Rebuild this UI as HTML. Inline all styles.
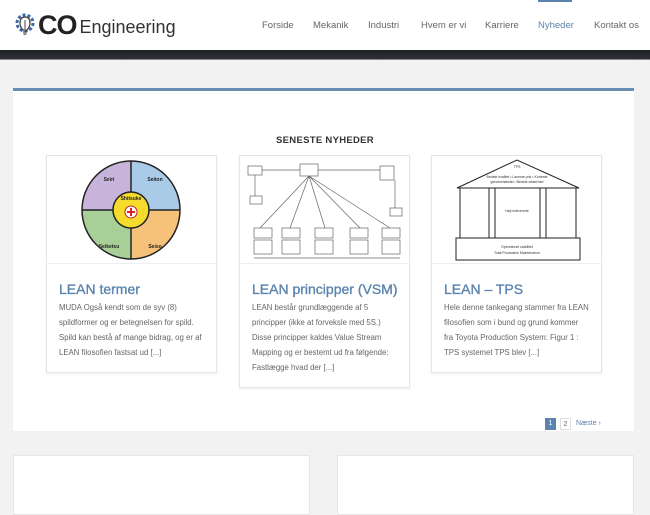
<!DOCTYPE html>
<html><head><meta charset="utf-8"><style>
*{box-sizing:border-box;margin:0;padding:0}
body{width:650px;height:500px;overflow:hidden;background:#f2f2f2;font-family:"Liberation Sans",sans-serif;position:relative}
.hdr{position:absolute;left:0;top:0;width:650px;height:50px;background:#fff}
.logo{position:absolute;left:14px;top:10px;display:flex;align-items:center}
.logo b{font-size:27px;color:#222;letter-spacing:-1px;margin-left:2px}
.logo span{font-size:18px;color:#333;margin-left:3px;margin-top:4px}
.nav{position:absolute;top:20px;font-size:9.5px;color:#666}
.bar{position:absolute;left:0;top:50px;width:650px;height:10px;background:linear-gradient(#1e2226,#2c3036);border-bottom:1px solid #888}
.main{position:absolute;left:13px;top:88px;width:621px;height:343px;background:#fff;border-top:3px solid #6a8db4}
h2{position:absolute;top:135px;left:0;width:650px;text-align:center;font-size:9.5px;font-weight:bold;color:#333;letter-spacing:.3px}
.card{position:absolute;top:155px;width:171px;background:#fff;border:1px solid #e6e6e6;box-shadow:0 1px 2px rgba(0,0,0,.08)}
.img{height:108px;border-bottom:1px solid #eee;position:relative;overflow:hidden}
.t{font-size:14px;color:#5a84ad;margin:17px 0 0 12px;font-weight:normal;-webkit-text-stroke:.35px #5a84ad;white-space:nowrap}
.p{font-size:7.8px;color:#666;line-height:15px;margin:3px 6px 12px 12px;white-space:nowrap}
.bot{position:absolute;top:455px;height:60px;background:#fff;border:1px solid #e6e6e6}
.pg{position:absolute;top:418px;font-size:7px;height:12px;line-height:12px;text-align:center}
</style></head><body>
<div class="hdr">
 <div class="logo">
  <svg width="22" height="26" viewBox="0 0 22 26"><circle cx="11" cy="10" r="8" fill="none" stroke="#3a6aa8" stroke-width="3" stroke-dasharray="3 2"/><path d="M6 10 Q6 4 11 4 Q16 4 16 10 Q16 14 13 17 L9 17 Q6 14 6 10Z" fill="#fff" stroke="#444" stroke-width="1.3"/><path d="M9 19h4M9.5 21h3" stroke="#444" stroke-width="1.3"/><path d="M11 7v9" stroke="#444"/></svg>
  <b>CO</b><span>Engineering</span>
 </div>
 <div class="nav" style="left:262px">Forside</div>
 <div class="nav" style="left:313px">Mekanik</div>
 <div class="nav" style="left:368px">Industri</div>
 <div class="nav" style="left:421px">Hvem er vi</div>
 <div class="nav" style="left:485px">Karriere</div>
 <div class="nav" style="left:538px;color:#5a84ad">Nyheder</div>
 <div style="position:absolute;left:538px;top:0;width:34px;height:2px;background:#5a84ad"></div>
 <div class="nav" style="left:594px">Kontakt os</div>
</div>
<div class="bar"></div>
<div class="main"></div>
<h2>SENESTE NYHEDER</h2>

<div class="card" style="left:46px">
 <div class="img">
  <svg width="171" height="108" viewBox="0 0 171 108">
   <path d="M84 54 L84 5 A49 49 0 0 0 35 54Z" fill="#c8b4da"/>
   <path d="M84 54 L84 5 A49 49 0 0 1 133 54Z" fill="#a9cbe8"/>
   <path d="M84 54 L35 54 A49 49 0 0 0 84 103Z" fill="#a8cf98"/>
   <path d="M84 54 L133 54 A49 49 0 0 1 84 103Z" fill="#f6c27a"/>
   <circle cx="84" cy="54" r="49" fill="none" stroke="#222" stroke-width="1.5"/>
   <path d="M84 5V103M35 54H133" stroke="#222" stroke-width="1.5"/>
   <circle cx="84" cy="54" r="18" fill="#f5dc2c" stroke="#222" stroke-width="1.5"/>
   <circle cx="84" cy="56" r="6" fill="#fff" stroke="#c22"/>
   <path d="M84 52v8M80 56h8" stroke="#d22" stroke-width="2"/>
   <g font-size="5" font-weight="bold" fill="#222" text-anchor="middle"><text x="62" y="25">Seiri</text><text x="108" y="25">Seiton</text><text x="84" y="44">Shitsuke</text><text x="62" y="92">Seiketsu</text><text x="108" y="92">Seiso</text></g>
  </svg>
 </div>
 <div class="t">LEAN termer</div>
 <div class="p">MUDA Også kendt som de syv (8)<br>spildformer og er betegnelsen for spild.<br>Spild kan bestå af mange bidrag, og er af<br>LEAN filosofien fastsat ud [...]</div>
</div>

<div class="card" style="left:239px">
 <div class="img">
  <svg width="171" height="108" viewBox="0 0 171 108" fill="none" stroke="#666" stroke-width=".7">
   <rect x="8" y="10" width="14" height="9"/><rect x="60" y="8" width="18" height="12"/><rect x="140" y="10" width="14" height="14"/>
   <rect x="10" y="40" width="12" height="8"/><rect x="150" y="52" width="12" height="8"/>
   <path d="M22 14L60 14M78 14L140 14M69 20L20 72M69 20L50 72M69 20L85 72M69 20L120 72M69 20L150 72M15 19V40M155 24V52"/>
   <rect x="14" y="72" width="18" height="10"/><rect x="42" y="72" width="18" height="10"/><rect x="75" y="72" width="18" height="10"/><rect x="110" y="72" width="18" height="10"/><rect x="142" y="72" width="18" height="10"/>
   <rect x="14" y="84" width="18" height="14"/><rect x="42" y="84" width="18" height="14"/><rect x="75" y="84" width="18" height="14"/><rect x="110" y="84" width="18" height="14"/><rect x="142" y="84" width="18" height="14"/>
   <path d="M14 102H160"/>
  </svg>
 </div>
 <div class="t">LEAN principper (VSM)</div>
 <div class="p">LEAN består grundlæggende af 5<br>principper (ikke at forveksle med 5S.)<br>Disse principper kaldes Value Stream<br>Mapping og er bestemt ud fra følgende:<br>Fastlægge hvad der [...]</div>
</div>

<div class="card" style="left:431px">
 <div class="img">
  <svg width="171" height="108" viewBox="0 0 171 108" fill="none" stroke="#222" stroke-width="1">
   <path d="M25 32L85 4L147 32Z"/>
   <rect x="28" y="32" width="116" height="50"/>
   <path d="M57 32V82M63 32V82M108 32V82M114 32V82"/>
   <rect x="24" y="82" width="124" height="22"/>
   <g font-size="3.5" fill="#333" stroke="none" text-anchor="middle"><text x="85" y="12">TPS</text><text x="85" y="22">Bedste kvalitet • Laveste pris • Korteste</text><text x="85" y="27">gennemløbstid • Bedste sikkerhed</text><text x="85" y="56">Høj motiverede</text><text x="85" y="92">Operationel stabilitet</text><text x="85" y="98">Total Productive Maintenance</text></g>
  </svg>
 </div>
 <div class="t">LEAN – TPS</div>
 <div class="p">Hele denne tankegang stammer fra LEAN<br>filosofien som i bund og grund kommer<br>fra Toyota Production System: Figur 1 :<br>TPS systemet TPS blev [...]</div>
</div>

<div class="pg" style="left:545px;width:11px;background:#5a84ad;color:#fff">1</div>
<div class="pg" style="left:560px;width:11px;border:1px solid #ddd;color:#666">2</div>
<div class="pg" style="left:576px;color:#5a84ad">Næste ›</div>

<div class="bot" style="left:13px;width:297px"></div>
<div class="bot" style="left:337px;width:297px"></div>
</body></html>
